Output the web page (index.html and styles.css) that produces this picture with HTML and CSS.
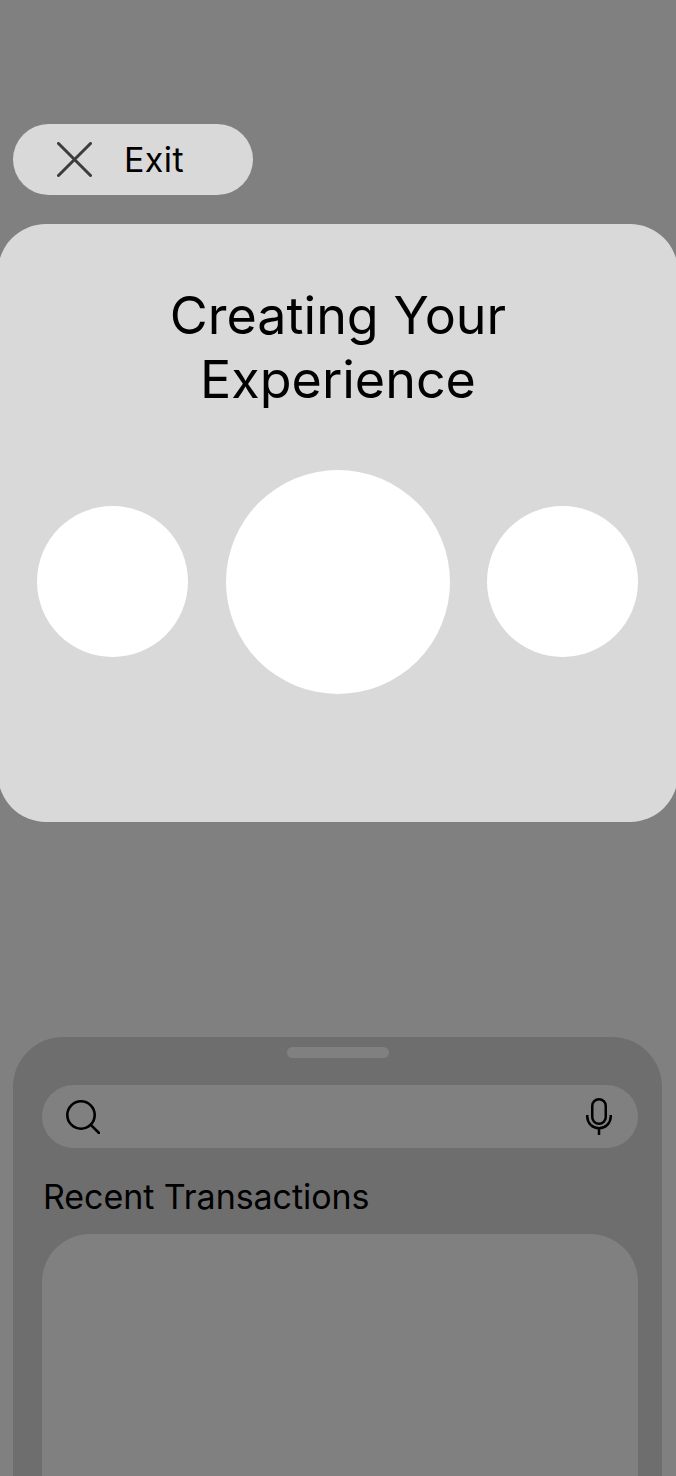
FILE: index.html
```html
<!DOCTYPE html>
<html lang="en">
<head>
<meta charset="utf-8">
<title>Creating Your Experience</title>
<link rel="stylesheet" href="styles.css">
</head>
<body>
<main class="screen">
  <button class="exit" type="button">
    <svg class="exit-icon" viewBox="0 0 35 35" aria-hidden="true"><path d="M1.5 1.5 33.5 33.5M33.5 1.5 1.5 33.5"/></svg>
    <span>Exit</span>
  </button>
  <section class="card">
    <h1 class="title">Creating Your<br>Experience</h1>
    <div class="dots">
      <div class="dot"></div>
      <div class="dot dot-large"></div>
      <div class="dot"></div>
    </div>
  </section>
  <section class="sheet">
    <div class="handle"></div>
    <div class="search">
      <svg class="search-icon" viewBox="0 0 34 34" aria-hidden="true"><circle cx="15" cy="15" r="13.7"/><path d="M24.8 24.8 33 33"/></svg>
      <svg class="mic-icon" viewBox="0 0 26 37" aria-hidden="true"><rect x="6.25" y="1.25" width="13.5" height="24.5" rx="6.75"/><path d="M1.25 17v1.5a11.75 11.75 0 0 0 23.5 0V17M13 30v7"/></svg>
    </div>
    <h2 class="section-title">Recent Transactions</h2>
    <div class="list"></div>
  </section>
</main>
</body>
</html>
```
FILE: styles.css
```css
* { box-sizing: border-box; }
html, body { margin: 0; height: 100%; }
body { background: #808080; overflow: hidden; font-family: "Inter", "Noto Sans", sans-serif; color: #000; }
.screen { width: 676px; height: 1476px; padding-top: 124px; overflow: hidden; display: flex; flex-direction: column; }
.exit { flex: none; width: 240px; height: 71px; margin-left: 13px; padding: 0 0 0 44px; border: 0; border-radius: 36px; background: #d9d9d9; display: flex; align-items: center; gap: 32px; font: 400 34px "Inter", sans-serif; letter-spacing: 0.4px; color: #000; }
.exit-icon { width: 35px; height: 35px; fill: none; stroke: #3c3c3c; stroke-width: 3; stroke-linecap: round; flex: none; }
.card { flex: none; width: 680px; height: 598px; margin: 29px 0 0 -2px; padding-top: 60px; border-radius: 48px; background: #d9d9d9; }
.title { margin: 0; font-size: 52px; line-height: 64px; font-weight: 400; text-align: center; }
.dots { margin-top: 58px; padding-left: 39px; display: flex; align-items: flex-start; gap: 37.5px; }
.dot { flex: none; width: 151px; height: 151px; margin-top: 36px; border-radius: 50%; background: #fff; }
.dot-large { width: 224px; height: 224px; margin-top: 0; }
.sheet { flex: none; width: 649px; height: 500px; margin: 215px 0 0 13px; padding: 10px 24px 0 29px; border-radius: 50px 50px 0 0; background: #6e6e6e; }
.handle { width: 102px; height: 11px; margin: 0 0 27px 245px; border-radius: 6px; background: #808080; }
.search { height: 63px; padding: 0 26px 0 24px; border-radius: 32px; background: #808080; display: flex; align-items: center; justify-content: space-between; }
.search-icon { width: 34px; height: 34px; fill: none; stroke: #000; stroke-width: 2.6; stroke-linecap: round; }
.mic-icon { width: 26px; height: 37px; fill: none; stroke: #000; stroke-width: 2.5; }
.section-title { margin: 28px 0 16px 1px; font-size: 34px; line-height: 42px; font-weight: 400; letter-spacing: -0.05px; }
.list { height: 300px; border-radius: 48px; background: #808080; }
```
